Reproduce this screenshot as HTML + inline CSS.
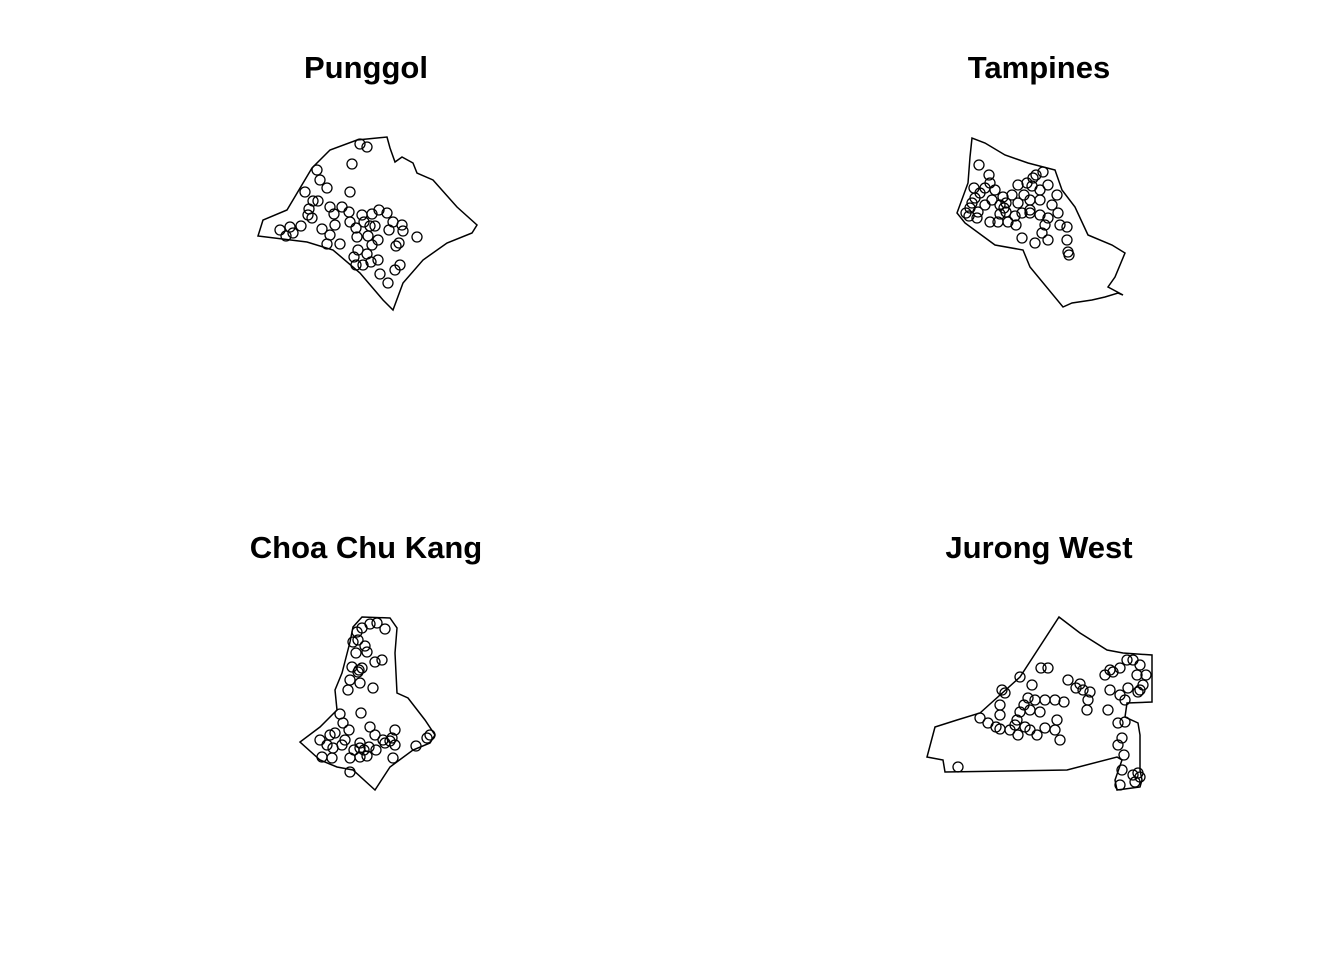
<!DOCTYPE html>
<html><head><style>html,body{margin:0;padding:0;background:#fff;}svg{display:block}</style></head>
<body>
<svg width="1344" height="960" viewBox="0 0 1344 960" xmlns="http://www.w3.org/2000/svg">
<g font-family="Liberation Sans, sans-serif" font-weight="bold" font-size="31" text-anchor="middle" fill="#000">
<text x="366" y="78">Punggol</text>
<text x="1039" y="78">Tampines</text>
<text x="366" y="558">Choa Chu Kang</text>
<text x="1039" y="558">Jurong West</text>
</g>
<g fill="none" stroke="#000" stroke-width="1.5">
<polygon points="258,236 263,220 287,210 312,168 330,150 357,140 387,137 390,148 395,162 402,157 413,163 417,173 433,180 457,207 477,225 472,233 447,243 423,260 403,283 393,310 383,300 360,273 333,250 307,242"/>
<polygon points="972,138 970,157 968,183 957,213 965,223 995,245 1023,250 1030,267 1063,307 1072,303 1092,300 1105,297 1118,293 1123,295 1108,287 1115,277 1125,253 1112,245 1088,235 1075,207 1062,190 1055,170 1028,163 1005,155 985,143"/>
<polygon points="362,617 390,618 397,628 395,653 397,693 408,698 425,720 435,735 430,743 413,750 390,767 375,790 353,770 337,767 320,760 300,742 320,727 337,710 335,690 342,673 350,642 353,627"/>
<polygon points="1059,617 1080,633 1107,650 1123,653 1152,655 1152,702 1127,703 1125,717 1138,723 1140,735 1140,770 1142,780 1140,787 1117,790 1115,780 1122,760 1117,757 1067,770 945,772 943,760 927,757 935,727 957,720 980,713 1020,677"/>
</g>
<g fill="none" stroke="#000" stroke-width="1.3" id="pts"></g>
</svg>
<script>
var P=[360,144,367,147,352,164,317,170,320,180,327,188,350,192,305,192,313,201,318,201,330,207,342,207,349,212,334,214,350,222,362,215,372,214,379,210,387,213,308,215,290,227,280,230,301,226,312,218,322,229,330,235,335,225,356,228,364,222,370,226,375,226,393,222,402,225,389,230,403,231,357,237,368,236,378,240,417,237,327,244,340,244,358,250,372,245,396,246,399,243,354,257,363,265,371,262,378,260,400,265,395,270,380,274,388,283,356,265,367,254,286,236,293,233,309,209,
979,165,989,175,990,183,985,188,980,193,975,198,972,203,970,208,966,213,978,212,985,205,992,200,995,190,1003,197,1006,203,1000,205,1004,208,1000,214,990,222,998,222,1008,222,1015,216,1022,213,1018,203,1012,195,1018,185,1027,183,1032,186,1036,175,1043,172,1048,185,1057,195,1052,205,1040,200,1030,200,1030,213,1040,215,1045,225,1048,218,1058,213,1060,225,1042,233,1048,240,1022,238,1035,243,1067,227,1067,240,1068,252,1069,255,1030,210,1024,195,1040,190,1033,178,974,188,969,216,977,218,1006,212,1016,225,
362,628,357,632,370,624,377,623,385,629,353,642,358,640,365,646,356,653,367,652,352,667,359,670,362,668,375,662,382,660,350,680,360,683,358,672,373,688,348,690,361,713,340,714,343,723,349,730,335,733,330,735,345,740,342,745,327,745,320,740,333,748,322,757,332,758,350,758,360,757,367,756,354,750,360,743,370,727,375,735,383,740,390,741,395,730,392,738,376,750,385,743,395,745,393,758,350,772,416,746,427,738,430,735,360,748,369,747,364,750,
958,767,980,718,988,723,996,727,1000,715,1000,705,1005,693,1002,690,1000,729,1010,730,1017,720,1018,735,1020,712,1024,705,1030,710,1028,698,1020,677,1032,685,1041,668,1048,668,1035,700,1045,700,1040,712,1055,700,1064,702,1045,728,1055,730,1060,740,1057,720,1037,735,1030,730,1025,727,1015,725,1068,680,1076,688,1083,690,1090,692,1080,684,1088,700,1087,710,1110,670,1105,675,1113,672,1120,668,1127,660,1133,660,1140,665,1137,675,1146,675,1128,688,1140,690,1143,685,1138,692,1110,690,1120,695,1125,700,1108,710,1118,723,1125,722,1122,738,1118,745,1124,755,1122,770,1133,775,1140,777,1138,773,1120,785,1135,782];
var g=document.getElementById('pts'),s='';
for(var i=0;i<P.length;i+=2)s+='<circle cx="'+P[i]+'" cy="'+P[i+1]+'" r="5"/>';
g.innerHTML=s;
</script>
</body></html>
